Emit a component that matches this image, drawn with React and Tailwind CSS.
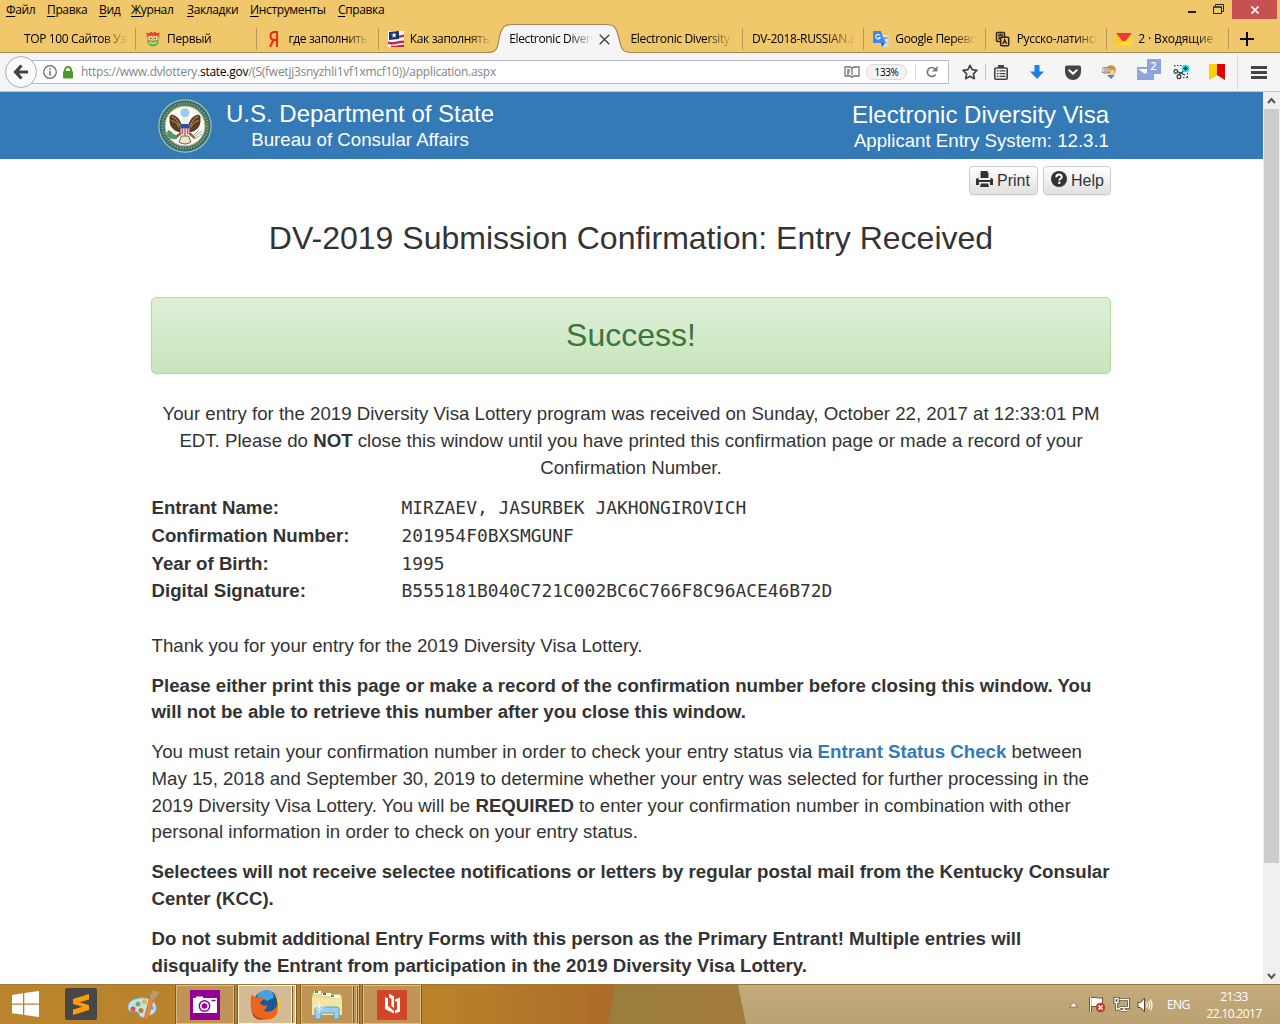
import React from "react";

const UI = "[font-family:'Open_Sans','Noto_Sans',sans-serif]";

const menu = [
  ["Ф", "айл", "w-[41px]"],
  ["П", "равка", "w-[52px]"],
  ["В", "ид", "w-[32px]"],
  ["Ж", "урнал", "w-[56px]"],
  ["З", "акладки", "w-[63px]"],
  ["И", "нструменты", "w-[88px]"],
  ["С", "правка", "w-[60px]"],
];

const MonkeyIcon = () => (
  <svg width="16" height="16" viewBox="0 0 16 16">
    <path d="M1 1.500l3 1L6 .5l2 1.500L10 .5l2 2 3-1-1.500 4h-11z" fill="#e8402a" />
    <path d="M0 5h16l-3 3H3z" fill="#e98b3a" />
    <ellipse cx="8" cy="10" rx="5.800" ry="5.300" fill="#5fae4a" />
    <ellipse cx="8" cy="7.500" rx="5" ry="3" fill="#ef9c46" />
    <circle cx="5.500" cy="7" r="2" fill="#f6f6d0" />
    <circle cx="10.500" cy="7" r="2" fill="#f6f6d0" />
    <circle cx="5.700" cy="7.300" r=".9" fill="#333" />
    <circle cx="10.300" cy="7.300" r=".9" fill="#333" />
    <path d="M4 11q4 3 8 0" stroke="#c8f080" strokeWidth="1.400" fill="none" />
  </svg>
);
const YandexIcon = () => (
  <svg width="16" height="16" viewBox="0 0 16 16">
    <path d="M11 0v16M11 1H8.500C5.800 1 4.500 2.700 4.500 5s1.400 3.900 4 3.900H11M7.500 9L4 16" stroke="#f8260c" strokeWidth="2" fill="none" />
  </svg>
);
const FlagIcon = () => (
  <svg width="16" height="16" viewBox="0 0 16 16">
    <rect width="16" height="16" fill="#fff" />
    <path d="M1 1l10-1v8l-10 1z" fill="#1c3275" />
    <path d="M11 4.500l5-1v2.500l-5 1zM0 10.500q5 1 8 0t8-1v2.500q-4 0-8 1t-8 0zM3 14.500q5 .5 13-1V16H3z" fill="#cf2638" />
    <path d="M6 1.500l.8 1.800 2 .1-1.600 1.200.6 1.900L6 5.500l-1.700 1 .6-1.900L3.300 3.400l2-.1z" fill="#fff" />
  </svg>
);
const TranslateIcon = () => (
  <svg width="16" height="16" viewBox="0 0 16 16">
    <path d="M5 4h10.500v12H9z" fill="#dcdcdc" />
    <path d="M9 7h6M12 6v1c0 3-2 4-3 5m0-4c1 2 3 3 5 4" stroke="#6e94b0" strokeWidth="1" fill="none" />
    <path d="M1 0h7l4 12H1a1 1 0 01-1-1V1a1 1 0 011-1z" fill="#4384f3" />
    <path d="M8 12h4l-3 4z" fill="#2957c8" />
    <path d="M7 4.500A2.300 2.300 0 107.200 6.500H5" stroke="#fff" strokeWidth="1.100" fill="none" />
  </svg>
);
const DictIcon = () => (
  <svg width="16" height="16" viewBox="0 0 16 16" fill="none" stroke="#2e2614">
    <rect x="1.500" y="1.500" width="8" height="9" rx="1" strokeWidth="1.500" />
    <path d="M3 4h5M5.500 2.500v2M3.500 8.500l4-3.500M3.500 5.500l4 3" strokeWidth="1.300" />
    <rect x="5.700" y="6.200" width="8" height="8.500" rx="1" fill="#f0c76a" strokeWidth="1.500" />
    <path d="M7.700 13l2-4.500 2 4.500M8.200 11.500h3" strokeWidth="1.200" />
  </svg>
);
const MailIcon = () => (
  <svg width="16" height="16" viewBox="0 0 16 16">
    <rect y="2" width="16" height="12" fill="#ffdc2c" />
    <path d="M0 2l8 8-8 4z" fill="#fcc91f" />
    <path d="M0 2h16l-6.500 8h-3z" fill="#f8333a" />
  </svg>
);

const Tab = ({ icon, title, last }) => (
  <div className={"flex h-[22px] w-[121.400px] shrink-0 items-center border-r pl-[9px] " + (last ? "border-transparent" : "border-[#b59a58]")}>
    {icon && <span className="mr-[6px] w-4 shrink-0">{icon}</span>}
    <span className={(icon ? "w-[81px]" : "w-[103px]") + " overflow-hidden whitespace-nowrap [mask-image:linear-gradient(to_right,#000_72%,transparent)]"}>{title}</span>
  </div>
);

function TitleBar() {
  return (
    <div className={"relative h-[53px] border-b border-[#a3894e] bg-[#f0c76a] text-[12px] tracking-[-0.360px] text-black " + UI}>
      <div className="flex h-[20px] justify-between">
        <div className="flex pl-[6px] leading-[20px]">
          {menu.map(([a, b, w]) => (
            <span key={b} className={w + " whitespace-nowrap"}>
              <span className="underline underline-offset-2">{a}</span>{b}
            </span>
          ))}
        </div>
        <div className="flex pr-[3px]">
          <svg width="44" height="19" viewBox="0 0 44 19" fill="none" stroke="#1e1e1e">
            <path d="M0 12h8" strokeWidth="2" />
            <path d="M25.500 7h8v6.500h-8zM27.500 6V4.500h8v7h-2" />
            <path d="M25 7h9" />
          </svg>
          <div className="flex h-[19px] w-[45px] items-center justify-center bg-[#c75050]">
            <svg width="8" height="8" viewBox="0 0 8 8"><path d="M.5 .5l7 7M7.500.5l-7 7" stroke="#fff" strokeWidth="1.700" /></svg>
          </div>
        </div>
      </div>
      <div className="flex h-[33px] items-start pt-[8px]">
        <div className="flex h-[22px] w-[136px] shrink-0 items-center border-r border-[#b59a58] pl-[24px]">
          <span className="w-[104px] overflow-hidden whitespace-nowrap [mask-image:linear-gradient(to_right,#000_75%,transparent)]">TOP 100 Сайтов Узб</span>
        </div>
        <Tab icon={<MonkeyIcon />} title="Первый" />
        <Tab icon={<YandexIcon />} title="где заполнить" />
        <Tab icon={<FlagIcon />} title="Как заполнять" last />
        <div className="relative h-[22px] w-[121.400px] shrink-0">
          <svg className="absolute left-[-12px] top-[-5px]" width="147" height="31" viewBox="0 0 147 31">
            <path d="M0 29.500C12 29.500 9 20 12.500 10 15 3 17 1.500 24 1.500H118C125 1.500 127 3 129.500 10 133 20 131 29.500 143 29.500V31H0z" fill="#f5f5f5" />
            <path d="M0 29.500C12 29.500 9 20 12.500 10 15 3 17 1.500 24 1.500H118C125 1.500 127 3 129.500 10 133 20 131 29.500 143 29.500" fill="none" stroke="#a3894e" strokeWidth="1.200" />
          </svg>
          <div className="relative flex h-full items-center pl-[9px]">
            <span className="w-[84px] overflow-hidden whitespace-nowrap [mask-image:linear-gradient(to_right,#000_72%,transparent)]">Electronic Diversity</span>
            <svg className="ml-[6px]" width="11" height="11" viewBox="0 0 11 11"><path d="M.7.7l9.600 9.600M10.300.7L.7 10.300" stroke="#444" strokeWidth="1.400" /></svg>
          </div>
        </div>
        <Tab title="Electronic Diversity Visa" />
        <Tab title="DV-2018-RUSSIAN.pdf" />
        <Tab icon={<TranslateIcon />} title="Google Переводчик" />
        <Tab icon={<DictIcon />} title="Русско-латинский" />
        <Tab icon={<MailIcon />} title={<span className="tracking-[-0.100px]">2 · Входящие —</span>} />
        <svg className="ml-[11px] mt-[4px] shrink-0" width="14" height="14" viewBox="0 0 14 14"><path d="M7 0v14M0 7h14" stroke="#000" strokeWidth="2" /></svg>
      </div>
    </div>
  );
}

const Cell = ({ children }) => <div className="flex h-full w-9 shrink-0 items-center justify-center">{children}</div>;

function NavBar() {
  return (
    <div className={"flex h-[39px] items-center border-b border-[#c2c2c2] bg-[#f5f5f5] " + UI}>
      <div className="z-10 ml-[5px] flex size-8 shrink-0 items-center justify-center rounded-full border border-[#a6aeb8] bg-[#fafafa]">
        <svg width="16" height="16" viewBox="0 0 16 16"><path d="M8.500 1.500L2.500 8l6 6.500M3 8h12" fill="none" stroke="#444" strokeWidth="3.200" /></svg>
      </div>
      <div className="-ml-[5px] flex h-[24px] w-[917px] shrink-0 items-center border border-[#b5bdc9] bg-white pl-[10px]">
        <svg width="14" height="14" viewBox="0 0 14 14" fill="none" stroke="#666"><circle cx="7" cy="7" r="6.300" strokeWidth="1.200" /><path d="M7 6v4.500M7 3.300v1.500" strokeWidth="1.500" /></svg>
        <svg className="ml-[6px]" width="10" height="13" viewBox="0 0 10 13"><rect y="5" width="10" height="7.500" rx="1" fill="#4a9c2c" /><path d="M2 6V4a3 3 0 016 0v2" fill="none" stroke="#4a9c2c" strokeWidth="1.900" /></svg>
        <span className="ml-[8px] w-[763px] whitespace-nowrap text-[12px] tracking-[-0.270px] text-[#858585]">
          https://www.dvlottery.<span className="text-black">state.gov</span>/(S(fwetjj3snyzhli1vf1xmcf10))/application.aspx
        </span>
        <svg width="16" height="12" viewBox="0 0 16 12" fill="none" stroke="#777" strokeWidth="1.300"><path d="M8 2.500L6.500 1H1v9h5.500L8 11.500 9.500 10H15V1H9.500zM8 2.500V9M3 4h3M3 6h3M3 8h2" /></svg>
        <span className="ml-[6px] flex h-[16px] w-[41px] items-center justify-center rounded-full border border-[#d9d9d9] bg-[#f3f3f3] text-[10px] tracking-[-0.400px] text-black">133%</span>
        <span className="ml-[8px] h-[16px] w-px bg-[#ddd]" />
        <svg className="ml-[10px]" width="12" height="12" viewBox="0 0 12 12"><path d="M9.600 8.500A4.500 4.500 0 119 2.800" fill="none" stroke="#777" strokeWidth="1.700" /><path d="M11.500 0v5.500H6z" fill="#777" /></svg>
      </div>
      <svg className="ml-[13px] shrink-0" width="16" height="16" viewBox="0 0 16 16"><path d="M8 1.300l2.100 4.400 4.800.7-3.500 3.400.9 4.900L8 12.300l-4.300 2.400.9-4.900L1.100 6.400l4.800-.7z" fill="none" stroke="#444" strokeWidth="1.700" strokeLinejoin="round" /></svg>
      <div className="ml-[7px] h-4 w-px shrink-0 bg-[#c8c8c8]" />
      <div className="-ml-[3px] flex h-full">
        <Cell><svg width="14" height="15" viewBox="0 0 14 15"><path d="M4 0h6v3H4z" fill="#444" /><rect x=".8" y="3" width="12.400" height="11.200" rx="1" fill="none" stroke="#444" strokeWidth="1.600" /><path d="M2.800 5.800h1.700M2.800 8.600h1.700M2.800 11.400h1.700M5.500 5.800h6M5.500 8.600h6M5.500 11.400h6" stroke="#444" strokeWidth="1.300" /></svg></Cell>
        <Cell><svg width="14" height="14" viewBox="0 0 14 14"><path d="M4.500 0h5v6.500H14l-7 7.500-7-7.500h4.500z" fill="#1c80e8" /></svg></Cell>
        <Cell><svg width="16" height="15" viewBox="0 0 16 15"><path d="M2 .5h12a2 2 0 012 2V7A8 8 0 010 7V2.500a2 2 0 012-2z" fill="#444" /><path d="M4.300 5.300L8 8.800l3.700-3.500" stroke="#fff" strokeWidth="2" fill="none" strokeLinecap="round" strokeLinejoin="round" /></svg></Cell>
        <Cell><svg width="14" height="14" viewBox="0 0 14 14"><circle cx="9" cy="5" r="4.800" fill="#d79048" /><path d="M6 5h6v3q-3 4-6 0z" fill="#f6d2a4" /><path d="M1 2.500h7v5H5L3 9V7.500H0v-4z" fill="#e9dcc6" stroke="#8c7a62" strokeWidth=".8" /><path d="M2 4h5M2 6h5" stroke="#8c7a62" strokeWidth=".8" /><path d="M5 10h8l-4 4z" fill="#3d8fc9" /></svg></Cell>
        <Cell>
          <span className="relative block h-[13px] w-[17px] translate-y-px">
            <svg width="17" height="13" viewBox="0 0 17 13"><rect width="17" height="13" fill="#8ea4da" /><path d="M1 2h14l-7 5z" fill="#fff" /></svg>
            <span className="absolute left-[10px] top-[-8px] flex h-[15px] w-[14px] items-center justify-center bg-[#8ea4da] text-[11px] font-semibold text-white">2</span>
          </span>
        </Cell>
        <Cell><svg width="17" height="16" viewBox="0 0 17 16"><path d="M1 6l11 5M4 12l8-6" stroke="#333" strokeWidth="1.300" /><circle cx="2.800" cy="7.500" r="1.800" fill="#f5f5f5" stroke="#333" strokeWidth="1.200" /><circle cx="6" cy="12.700" r="1.900" fill="#f5f5f5" stroke="#333" strokeWidth="1.200" /><path d="M1 1.500h9M1.500 1v3M14.500 9v6M10 13.500h5" stroke="#333" strokeDasharray="1.500 1.500" fill="none" /><circle cx="12.500" cy="4.500" r="3.800" fill="#18e4f2" /><path d="M12.500 2v5M10 4.500h5M10.800 2.800l3.400 3.400M14.200 2.800l-3.400 3.400" stroke="#1c2c34" strokeWidth=".8" /></svg></Cell>
        <Cell><svg width="16" height="16" viewBox="0 0 16 16"><path d="M0 0h9v11l-9 5z" fill="#ffd000" /><path d="M8 0h8v16l-8-5z" fill="#e20000" /></svg></Cell>
      </div>
      <div className="ml-[2px] h-9 w-px shrink-0 bg-[#dadada]" />
      <svg className="ml-[13px] shrink-0" width="16" height="13" viewBox="0 0 16 13"><path d="M0 1.500h16M0 6.500h16M0 11.500h16" stroke="#444" strokeWidth="2.800" /></svg>
    </div>
  );
}

const Seal = () => (
  <svg width="54" height="54" viewBox="0 0 54 54">
    <circle cx="27" cy="27" r="26.700" fill="#a9bfa0" />
    <circle cx="27" cy="27" r="25.500" fill="#2d6a72" />
    <circle cx="27" cy="27" r="22.500" fill="none" stroke="#8d9f76" strokeWidth="2.600" strokeDasharray="1.300 1.500" />
    <circle cx="27" cy="27" r="19.900" fill="#fdfdf8" stroke="#c9bc70" strokeWidth="1.200" />
    <path d="M23.500 25Q21 17 14 15.500 11 16 11.500 20q-.5 6 3.500 10 4 4 8 3zM30.500 25Q33 17 40 15.500 43 16 42.500 20q.5 6-3.500 10-4 4-8 3z" fill="#5d3c22" />
    <path d="M13.500 17.500q6 2 8 9M13.500 21.500q5 1 7.500 7M40.500 17.500q-6 2-8 9M40.500 21.500q-5 1-7.500 7" stroke="#c39c63" fill="none" />
    <path d="M23 34l-6 5M31 34l6 5" stroke="#8a6434" strokeWidth="2.500" />
    <path d="M23.500 37h7l2.500 6q-6 4-12 0z" fill="#e9e4d6" stroke="#7c5a38" />
    <path d="M19 40q-7 1-9.500-3-1-4 .5-6 4 1 5 4 4 0 4 5z" fill="#55936a" />
    <path d="M36 38l8-6M37 40l7-5M35 37l6-6" stroke="#9aa4b0" />
    <circle cx="27" cy="13.800" r="4.600" fill="#97cbee" stroke="#cfe6f5" strokeWidth="1.200" />
    <path d="M23.500 22q.5-4 4-4 2.500.5 3 4v3h-7z" fill="#efece4" />
    <path d="M22.500 25h9v8q-4.500 6-9 0z" fill="#f0d5d8" />
    <path d="M22.500 25h9v4.500h-9z" fill="#2c509e" />
    <path d="M24.300 29.500v5.500M27 29.500V37M29.700 29.500V35" stroke="#d0505e" strokeWidth="1.300" />
  </svg>
);

const L = ({ children }) => <span className="block whitespace-nowrap">{children}</span>;

const entries = [
  ["Entrant Name:", "MIRZAEV, JASURBEK JAKHONGIROVICH"],
  ["Confirmation Number:", "201954F0BXSMGUNF"],
  ["Year of Birth:", "1995"],
  ["Digital Signature:", "B555181B040C721C002BC6C766F8C96ACE46B72D"],
];

const btn = "flex h-[29px] items-center rounded-[4px] border border-[#ccc] bg-gradient-to-b from-white to-[#e0e0e0] text-[16px] leading-none shadow-[0_1px_1px_rgba(0,0,0,0.08)]";

function Page() {
  return (
    <div className="h-full w-[1263px] overflow-hidden bg-white text-[18.667px] leading-[26.667px] text-[#333] [font-family:'Liberation_Sans',Arial,sans-serif]">
      <header className="flex h-[67px] justify-between bg-[#337ab7] pl-[157.500px] pr-[154px] pt-[6.500px] text-white">
        <div className="flex">
          <Seal />
          <div className="ml-[14.500px] w-[268px] whitespace-nowrap text-center">
            <div className="pt-[1.500px] text-[24px] leading-[28px]">U.S. Department of State</div>
            <div className="text-[18.667px] leading-[24px]">Bureau of Consular Affairs</div>
          </div>
        </div>
        <div className="whitespace-nowrap text-right">
          <div className="pt-[2.500px] text-[24px] leading-[28px]">Electronic Diversity Visa</div>
          <div className="text-[18.667px] leading-[24px]">Applicant Entry System: 12.3.1</div>
        </div>
      </header>
      <main className="ml-[151px] w-[960px]">
        <div className="flex justify-end gap-[5px] pt-[7px]">
          <button className={btn + " w-[69px] pl-[6px]"}>
            <svg className="-mt-[3px] mr-[4px]" width="17" height="16" viewBox="0 0 17 16"><path d="M5 0h6l1.500 2v5h-8V1zM0 8l2.500-1.500V9h12V6.500L17 8v6h-3v-3H3v3H0zM5 12.500h7l1 3.500H4z" fill="#333" /></svg>
            Print
          </button>
          <button className={btn + " w-[68px] pl-[7px]"}>
            <svg className="-mt-[3px] mr-[4px]" width="16" height="16" viewBox="0 0 16 16"><circle cx="8" cy="8" r="8" fill="#333" /><path d="M5.300 6.200C5.300 2.600 11 2.800 10.800 6c-.1 1.700-2.500 1.800-2.500 3.500" fill="none" stroke="#fff" strokeWidth="2" /><path d="M7.200 10.700h2.200v2.200H7.200z" fill="#fff" /></svg>
            Help
          </button>
        </div>
        <h1 className="mt-[25px] whitespace-nowrap text-center text-[32px] leading-[36px] tracking-[0.010px]">DV-2019 Submission Confirmation: Entry Received</h1>
        <div className="mt-[41px] flex h-[77px] items-center justify-center rounded-[5px] border border-[#b2dba1] bg-gradient-to-b from-[#dff0d8] to-[#c8e5bc] pb-px text-[32px] text-[#3c763d] shadow-[0_1px_2px_rgba(0,0,0,0.05)]">Success!</div>
        <p className="mt-[26px] text-center leading-[27px]">
          <L>Your entry for the 2019 Diversity Visa Lottery program was received on Sunday, October 22, 2017 at 12:33:01 PM</L>
          <L>EDT. Please do <b>NOT</b> close this window until you have printed this confirmation page or made a record of your</L>
          <L>Confirmation Number.</L>
        </p>
        <dl className="mt-[13px] pl-[0.500px]">
          {entries.map(([k, v]) => (
            <div key={k} className="flex whitespace-nowrap">
              <dt className="w-[250px] font-bold leading-[27px]">{k}</dt>
              <dd className="pt-px text-[17.900px] leading-[26.800px] [font-family:'DejaVu_Sans_Mono',monospace]">{v}</dd>
            </div>
          ))}
        </dl>
        <div className="mt-[27.500px] space-y-[13.333px] pl-[0.500px]">
          <p><L>Thank you for your entry for the 2019 Diversity Visa Lottery.</L></p>
          <p className="font-bold">
            <L>Please either print this page or make a record of the confirmation number before closing this window. You</L>
            <L>will not be able to retrieve this number after you close this window.</L>
          </p>
          <p>
            <L>You must retain your confirmation number in order to check your entry status via <b className="text-[#337ab7]">Entrant Status Check</b> between</L>
            <L>May 15, 2018 and September 30, 2019 to determine whether your entry was selected for further processing in the</L>
            <L>2019 Diversity Visa Lottery. You will be <b>REQUIRED</b> to enter your confirmation number in combination with other</L>
            <L>personal information in order to check on your entry status.</L>
          </p>
          <p className="font-bold">
            <L>Selectees will not receive selectee notifications or letters by regular postal mail from the Kentucky Consular</L>
            <L>Center (KCC).</L>
          </p>
          <p className="font-bold">
            <L>Do not submit additional Entry Forms with this person as the Primary Entrant! Multiple entries will</L>
            <L>disqualify the Entrant from participation in the 2019 Diversity Visa Lottery.</L>
          </p>
        </div>
      </main>
    </div>
  );
}

const ScrollBar = () => (
  <div className="flex h-full w-[17px] flex-col items-center bg-[#f0f0f0]">
    <svg width="17" height="17" viewBox="0 0 17 17"><path d="M5 11l3.500-4 3.500 4" fill="none" stroke="#555" strokeWidth="2" /></svg>
    <div className="h-[754px] w-[15px] bg-[#cdcdcd]" />
    <svg className="mt-auto" width="17" height="17" viewBox="0 0 17 17"><path d="M5 7l3.500 4L12 7" fill="none" stroke="#555" strokeWidth="2" /></svg>
  </div>
);

const task = "flex h-[39px] items-center justify-center border border-[#d9bd8c] bg-[#bf9455] shadow-[0_0_0_1px_#7d5a24]";

function TaskBar() {
  return (
    <div className={"relative flex h-[40px] items-center overflow-hidden border-t border-[#9c7838] bg-gradient-to-r from-[#b9842c] via-[#b8812a] via-35% to-[#ac6b28] to-48% text-white " + UI}>
      <div className="absolute inset-y-0 right-0 left-[608px] bg-gradient-to-r from-[#9a7d3c] to-[#a37c3d] to-20% [clip-path:polygon(7px_0,100%_0,100%_100%,0_100%)]" />
      <div className="absolute inset-y-0 right-0 left-[738px] bg-gradient-to-b from-[#c3aa7a] to-[#baa272] [clip-path:polygon(0_0,100%_0,100%_100%,8px_100%)]" />
      <div className="relative flex w-full items-center">
        <svg className="-mt-[2px] ml-[12px]" width="27" height="26" viewBox="0 0 27 26"><path d="M0 4l11-1.700V12.500H0zM12.300 2.100L27 0v12.500H12.300zM0 13.700h11v10L0 22.200zM12.300 13.700H27V26l-14.700-2z" fill="#fff" /></svg>
        <svg className="-mt-px ml-[26px]" width="32" height="32" viewBox="0 0 32 32"><rect width="32" height="32" rx="2" fill="#474747" /><path d="M24 6v5.500L14.500 14.300 24 17v5L8 27v-5.500l9.500-2.800L8 16v-5z" fill="#ff9b08" /></svg>
        <svg className="ml-[30px]" width="32" height="32" viewBox="0 0 32 32">
          <path d="M1 19C0 12 9 8 18 9c9 1 12 7 11 12-1 4-5 5-8 6s-4 2-7 1-1-4-4-5-9 1-9-4z" fill="#c4e2f3" stroke="#7eaac6" />
          <circle cx="6" cy="20" r="2.600" fill="#d8584c" /><circle cx="11" cy="15" r="2.500" fill="#6cb258" /><circle cx="17.500" cy="12.800" r="2.500" fill="#eeb13c" /><circle cx="14" cy="21.500" r="2.500" fill="#b8842c" /><circle cx="25" cy="19" r="2" fill="#78aede" />
          <path d="M23 7l4 2-6 20q-3 4-4 2l1-5z" fill="#e88a30" stroke="#b86820" strokeWidth=".6" /><path d="M22 6q3-1 4-5 3 2 6 2-2 6-6 8z" fill="#b99a78" />
        </svg>
        <div className={task + " ml-[17px] w-[58px]"}>
          <svg width="30" height="30" viewBox="0 0 30 30"><rect width="30" height="30" fill="#920096" /><path d="M3 8h3V6.500h7V8h14v15H3z" fill="#fff" /><circle cx="14.500" cy="16" r="5.200" fill="#fff" stroke="#920096" strokeWidth="1.500" /><circle cx="14.500" cy="16" r="2.800" fill="#920096" /><path d="M21.500 10.500h4" stroke="#920096" strokeWidth="1.500" /></svg>
        </div>
        <div className="ml-[4px] flex h-[39px] w-[58px] border border-[#fff6e2] bg-[#d4bb94] shadow-[0_0_0_1px_#7d5a24]">
          <div className="flex w-[53px] items-center justify-center border-r border-[#fff6e2] shadow-[1px_0_0_#7d5a24]">
            <svg width="31" height="31" viewBox="0 0 31 31">
              <circle cx="16.500" cy="14.500" r="13" fill="#1d5796" />
              <path d="M8 5Q14-1 21 2q4 3 2 7l-6 3-5-3-5-1z" fill="#4aa3d8" />
              <path d="M24 4q8 6 6 14-3 12-14 12 9-3 11-10 2-8-3-16z" fill="#ffc62c" />
              <path d="M2 5q1 2 3 3l5 .5q3 0 4 2-4 2-4 4 3 3 7 1.500 0 5-4 5 4 3 8 1 5-2 6-6 3 10-6 14Q8 33 2 23-1 13 2 5z" fill="#ea661e" />
              <path d="M1 16q0 13 14 14-10 3-13-6-1-4-1-8z" fill="#c43a18" />
            </svg>
          </div>
        </div>
        <div className="ml-[5px] flex h-[39px] w-[58px] border border-[#d9bd8c] bg-[#bf9455] shadow-[0_0_0_1px_#7d5a24]">
          <div className="flex w-[51px] items-center justify-center border-r border-[#d9bd8c] shadow-[1px_0_0_#7d5a24]">
            <svg width="32" height="31" viewBox="0 0 32 31">
              <path d="M1 5l3-3h6l1 3h18l2 2v19H1z" fill="#f0d98c" stroke="#b79a4a" strokeWidth=".7" />
              <path d="M3 2h7v3H3zM11 4h9v3h-9zM20 6h9v3h-9z" fill="#fff" />
              <path d="M4 2h3v2H4z" fill="#18a838" /><path d="M12 4h3v2h-3z" fill="#d43a2a" /><path d="M20 6h3v2h-3z" fill="#3a96d8" />
              <path d="M1 8h11l2 2h17v16H1z" fill="#f4e4a6" />
              <path d="M4 30V20q0-2 2-2h20q2 0 2 2v10h-5v-6H10v6z" fill="#9fcfe8" stroke="#5f9fc4" />
              <path d="M8 12v12M3 18h11M5 15l6 6M11 15l-6 6" stroke="#fff" strokeWidth=".9" opacity=".8" />
            </svg>
          </div>
          <div className="w-[4px] border-r border-[#d9bd8c] shadow-[1px_0_0_#7d5a24]" />
        </div>
        <div className={task + " ml-[4px] w-[58px]"}>
          <svg width="30" height="30" viewBox="0 0 30 30"><rect width="30" height="30" fill="#d24625" /><path d="M8 7l3 1.500V16l6 5v2.500L8 19zM12 3.500l5 3V18l-2.500-2V9L12 7.500zM18 9.500l5-2v14l-5 2v-3l2-1v-8h-2z" fill="#fff" /></svg>
        </div>
        <div className="ml-auto flex items-center pr-[18px]">
          <svg width="9" height="6" viewBox="0 0 9 6"><path d="M4.500.5L8.500 5h-8z" fill="#fff" stroke="#6d5b38" strokeWidth=".7" /></svg>
          <svg className="ml-[11px]" width="17" height="17" viewBox="0 0 17 17"><path d="M1.500 1v15M3 2.500c4-1 4 1.500 9.500.5v7C8 11 7 8.500 3 9.500z" fill="#fff" stroke="#5a4a2c" strokeWidth="3" /><path d="M1.500 1v15M3 2.500c4-1 4 1.500 9.500.5v7C8 11 7 8.500 3 9.500z" fill="#fff" stroke="#fff" strokeWidth="1.200" /><circle cx="11.500" cy="11.500" r="4.800" fill="#dc3526" /><path d="M9.500 9.500l4 4M13.500 9.500l-4 4" stroke="#fff" strokeWidth="1.500" /></svg>
          <svg className="ml-[7px]" width="17" height="15" viewBox="0 0 17 15"><path d="M6.500 2.500h9v8h-9M2 1.500h3v4H2zM3.500 6v6H7M8 13.500h6M11 11v2" fill="none" stroke="#5a4a2c" strokeWidth="3" /><path d="M6.500 2.500h9v8h-9M2 1.500h3v4H2zM3.500 6v6H7M8 13.500h6M11 11v2" fill="none" stroke="#fff" strokeWidth="1.300" /></svg>
          <svg className="ml-[7px]" width="16" height="16" viewBox="0 0 16 16"><path d="M1 5.500h2.500L7.500 1v14l-4-4.500H1z" fill="#fff" stroke="#5a4a2c" strokeWidth="1" /><path d="M9.500 5.500q1.500 2.500 0 5M11.500 4q2.500 4 0 8M13.500 2.500q3 5.500 0 11" fill="none" stroke="#fff" strokeWidth="1.200" /></svg>
          <span className="ml-[14px] w-[24px] text-[12px] tracking-[-0.600px]">ENG</span>
          <div className="ml-[15px] w-[56px] whitespace-nowrap text-center text-[12px] leading-[17px] tracking-[-0.600px]">
            <div>21:33</div>
            <div>22.10.2017</div>
          </div>
        </div>
      </div>
    </div>
  );
}

export default function App() {
  return (
    <div className="flex h-[1024px] w-[1280px] flex-col overflow-hidden bg-white">
      <TitleBar />
      <NavBar />
      <div className="flex h-[892px] min-h-0">
        <Page />
        <ScrollBar />
      </div>
      <TaskBar />
    </div>
  );
}
